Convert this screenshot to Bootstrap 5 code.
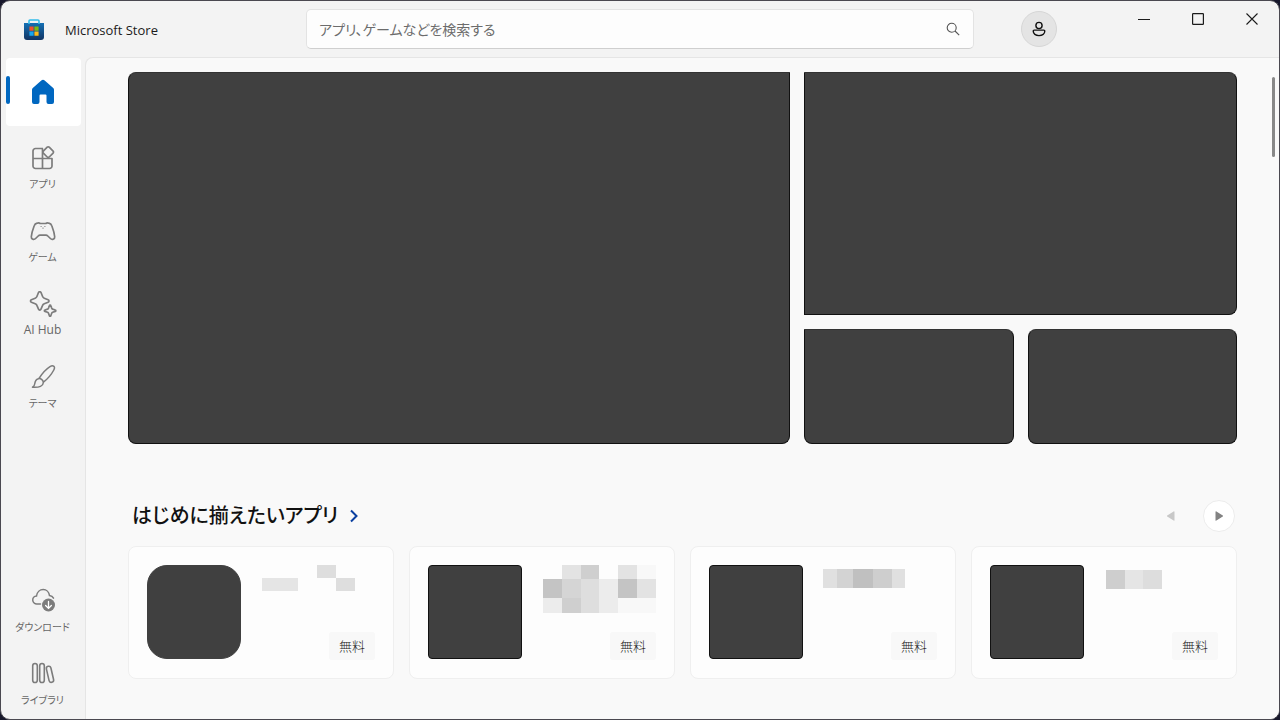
<!DOCTYPE html>
<html lang="ja">
<head>
<meta charset="utf-8">
<meta name="viewport" content="width=device-width, initial-scale=1">
<title>Microsoft Store</title>
<link href="https://cdn.jsdelivr.net/npm/bootstrap@5.3.0/dist/css/bootstrap.min.css" rel="stylesheet">
<style>
  body { background: #17172b; font-family: "Open Sans", "Noto Sans CJK JP", sans-serif; font-feature-settings: "palt"; color: #1b1b1b; }
  .app-window { min-height: 100vh; background: #f3f3f3; border: 1px solid #4a4850; border-radius: 10px; overflow: hidden; }
  .title-bar { display: grid; grid-template-columns: 305px minmax(0, 668px) 1fr; height: 56px; }
  .brand { padding-left: 22px; gap: 20px; font-size: 13px; line-height: 18px; padding-top: 2px; }
  .search-box { height: 40px; background: #fdfdfd; border: 1px solid #e3e3e3; border-bottom-color: #cfcfcf; border-radius: 5px; }
  .search-box input { font-size: 14px; color: #1b1b1b; padding: 0 12px; outline: 0; font-feature-settings: "palt"; }
  .search-box input::placeholder { color: #6c6c6c; opacity: 1; }
  .search-box button { width: 40px; color: #555; }
  .plain-btn { border: 0; background: none; padding: 0; display: flex; align-items: center; justify-content: center; }
  .plain-btn svg, .rail-link svg, .brand svg { flex: none; }
  .avatar { width: 36px; height: 36px; margin-left: 47px; margin-top: 10px; border-radius: 50%; background: #e4e4e4; border: 1px solid #d6d6d6; }
  .win-btn { width: 54px; height: 36px; color: #1b1b1b; }
  .rail { width: 84px; padding: 1px 4px 4px 5px; }
  .rail-list { gap: 5px; }
  .rail-link { height: 68px; width: 75px; padding: 14px 2px 0 0; gap: 4px; font-size: 10px; line-height: 18px; color: #666; text-decoration: none; border-radius: 4px; white-space: nowrap; }
  .rail-link svg { color: #7c7c7c; }
  .rail-link [lang="en"] { font-size: 12px; }
  .rail-link.active { background: #fff; padding: 0 2px 0 0; justify-content: center; position: relative; }
  .rail-link.active svg { color: #0067c0; }
  .rail-link.active::before { content: ""; position: absolute; left: 0; top: 18px; width: 4px; height: 28px; border-radius: 2px; background: #0067c0; }
  .store { background: #f9f9f9; border-left: 1px solid #e5e5e5; border-top: 1px solid #e5e5e5; border-top-left-radius: 8px; padding: 14px 42px 40px; min-width: 0; }
  .hero { display: grid; grid-template-columns: 661fr 209fr 209fr; grid-template-rows: 243px 115px; gap: 14px; }
  .tile { background: #404040; border: 1px solid #111; border-top-color: #333; border-radius: 8px; display: block; }
  .tile-main { grid-row: span 2; border-top-right-radius: 0; }
  .tile-wide { grid-column: span 2; border-radius: 0 8px 8px 0; }
  .tile-first { border-top-left-radius: 0; }
  .shelf-head { margin-top: 56px; margin-bottom: 14px; padding-left: 4px; padding-right: 2px; height: 32px; }
  .shelf-title { font-size: 20px; font-weight: 500; color: #111; text-decoration: none; gap: 12px; }
  .pager { width: 32px; height: 32px; border-radius: 50%; color: #828282; }
  .pager-on { background: #fff; border: 1px solid #ececec; }
  .pager:disabled { color: #c8c8c8; }
  .shelf { display: grid; grid-template-columns: repeat(4, minmax(0, 1fr)); gap: 15px; }
  .app-card { height: 133px; background: #fdfdfd; border: 1px solid #efefef; border-radius: 8px; padding: 18px; color: inherit; text-decoration: none; }
  .app-art { width: 94px; height: 94px; flex: none; background: #404040; border: 1px solid #111; border-radius: 4px; }
  .app-art-round { border-radius: 20px; border-color: #404040; }
  .app-text { padding-left: 20px; }
  .price { background: #f8f8f8; font-size: 13px; font-weight: 300; line-height: 28px; padding: 0 10px; border-radius: 3px; }
  .thumb { position: absolute; right: 4px; top: 20px; width: 3px; height: 80px; border-radius: 2px; background: #888; }
</style>
</head>
<body>
<div class="app-window d-flex flex-column">
  <header class="title-bar">
    <div class="brand d-flex align-items-center">
      <svg width="22" height="22" viewBox="0 0 22 22" aria-hidden="true">
        <defs><linearGradient id="bag" x1="0" y1="0" x2="0" y2="1"><stop offset="0" stop-color="#1470b4"/><stop offset="1" stop-color="#123463"/></linearGradient></defs>
        <path d="M1 4h20v14a3 3 0 0 1-3 3H4a3 3 0 0 1-3-3z" fill="url(#bag)"/>
        <path d="M6 5V2a1 1 0 0 1 1-1h8a1 1 0 0 1 1 1v3" fill="none" stroke="#35bdec" stroke-width="1.6"/>
        <path d="M6.4 7.5h4.200v4.200H6.400z" fill="#f0532b"/><path d="M11.400 7.500h4.200v4.200h-4.200z" fill="#80bb12"/>
        <path d="M6.400 12.500h4.200v4.200H6.400z" fill="#18a7ef"/><path d="M11.400 12.500h4.200v4.200h-4.200z" fill="#fdba19"/>
      </svg>
      <span>Microsoft Store</span>
    </div>
    <form class="search-box d-flex align-self-center" role="search">
      <input class="border-0 bg-transparent flex-grow-1" type="search" aria-label="検索" placeholder="アプリ、ゲームなどを検索する">
      <button class="plain-btn" type="button" aria-label="検索する"><svg width="14" height="14" viewBox="0 0 14 14" fill="none" stroke="currentColor" stroke-width="1.1"><circle cx="5.7" cy="5.7" r="4.5"/><path d="M9 9l4.200 4.200"/></svg></button>
    </form>
    <div class="d-flex align-items-start">
      <button class="plain-btn avatar" type="button" aria-label="アカウント"><svg width="16" height="16" viewBox="0 0 16 16" fill="none" stroke="#111" stroke-width="1.4"><circle cx="8" cy="4.5" r="3.1"/><path d="M3.200 9.100h9.600a1 1 0 0 1 1 1c0 2.700-2.500 4.500-5.800 4.500s-5.800-1.800-5.800-4.500a1 1 0 0 1 1-1z"/></svg></button>
      <div class="d-flex ms-auto">
        <button class="plain-btn win-btn" type="button" aria-label="最小化"><svg width="12" height="12" viewBox="0 0 12 12" stroke="currentColor"><path d="M0 6.500h12"/></svg></button>
        <button class="plain-btn win-btn" type="button" aria-label="最大化"><svg width="12" height="12" viewBox="0 0 12 12" fill="none" stroke="currentColor" stroke-width="1.2"><rect x=".6" y=".6" width="10.8" height="10.8" rx=".6"/></svg></button>
        <button class="plain-btn win-btn" type="button" aria-label="閉じる"><svg width="12" height="12" viewBox="0 0 12 12" stroke="currentColor" stroke-width="1.1"><path d="M.5.5l11 11M11.500.5l-11 11"/></svg></button>
      </div>
    </div>
  </header>

  <div class="d-flex flex-grow-1 position-relative">
    <nav class="rail d-flex flex-column justify-content-between flex-shrink-0" aria-label="メイン">
      <div class="rail-list d-flex flex-column">
        <a class="rail-link active d-flex flex-column align-items-center" href="#" aria-label="ホーム" aria-current="page">
          <svg width="24" height="26" viewBox="0 0 24 26" fill="currentColor"><path d="M10.300 1.600a2.500 2.500 0 0 1 3.400 0l8.500 7.300A2.500 2.500 0 0 1 23 10.800V23a2 2 0 0 1-2 2h-3.500a2 2 0 0 1-2-2v-6.500a1 1 0 0 0-1-1h-5a1 1 0 0 0-1 1V23a2 2 0 0 1-2 2H3a2 2 0 0 1-2-2V10.800c0-.7.300-1.400.8-1.900z"/></svg>
        </a>
        <a class="rail-link d-flex flex-column align-items-center" href="#">
          <svg width="26" height="26" viewBox="0 0 26 26" fill="none" stroke="currentColor" stroke-width="1.700" stroke-linejoin="round"><path d="M13 3.500H5.500A2.500 2.500 0 0 0 3 6v15a2.500 2.500 0 0 0 2.500 2.500h14A2.500 2.500 0 0 0 22 21v-7.500H3M12.500 3.500v20"/><path d="M17.200 2.200l-3.900 3.900a1.400 1.400 0 0 0 0 2l3.900 3.900a1.400 1.400 0 0 0 2 0l3.900-3.900a1.400 1.400 0 0 0 0-2l-3.900-3.900a1.400 1.400 0 0 0-2 0z"/></svg>
          <span>アプリ</span>
        </a>
        <a class="rail-link d-flex flex-column align-items-center" href="#">
          <svg width="26" height="26" viewBox="0 0 26 26" fill="none" stroke="currentColor" stroke-width="1.700" stroke-linejoin="round"><path d="M7.200 5.200c1-.5 2.200-.3 3 .3h5.600c.8-.6 2-.8 3-.3 1.600.3 2.500 1.100 3 2.600 1.400 3.700 2.600 7.500 2.900 11 .2 2.400-2.700 3.400-4.300 1.700L17.800 18c-.5-.5-1.100-.8-1.800-.8h-6c-.7 0-1.300.3-1.800.8l-2.600 2.500C4 22.200 1.100 21.200 1.300 18.800c.3-3.500 1.500-7.300 2.900-11 .5-1.500 1.400-2.300 3-2.600z"/><path d="M10.600 8.500h1M14.400 8.500h1M12.500 10.200h1" stroke-width="1.200"/></svg>
          <span>ゲーム</span>
        </a>
        <a class="rail-link d-flex flex-column align-items-center" href="#">
          <svg width="28" height="26" viewBox="0 0 28 26" fill="none" stroke="currentColor" stroke-width="1.700" stroke-linejoin="round"><path d="M9.500 1.500c.8-1 2-1 2.500 0l1.600 4c.3.800.9 1.400 1.700 1.700l3.800 1.500c1.200.5 1.200 2 0 2.500l-3.800 1.500c-.8.300-1.400.9-1.700 1.700l-1.600 3.800c-.5 1.200-2 1.200-2.500 0l-1.600-3.800c-.3-.8-.9-1.400-1.700-1.700l-3.800-1.500c-1.200-.5-1.200-2 0-2.500l3.800-1.500c.8-.3 1.400-.9 1.700-1.700z"/><path d="M20.400 14.500c.2-.7 1.200-.7 1.400 0l.9 2.600c.2.500.5.800 1 1l2.600.9c.7.200.7 1.200 0 1.400l-2.600.9c-.5.200-.8.500-1 1l-.9 2.400c-.2.700-1.200.7-1.400 0l-.9-2.400c-.2-.5-.5-.8-1-1l-2.600-.9c-.7-.2-.7-1.200 0-1.400l2.600-.9c.5-.2.800-.5 1-1z"/></svg>
          <span lang="en">AI Hub</span>
        </a>
        <a class="rail-link d-flex flex-column align-items-center" href="#">
          <svg width="26" height="26" viewBox="0 0 26 26" fill="none" stroke="currentColor" stroke-width="1.500" stroke-linejoin="round"><path d="M9 14.500C12 9.500 15.500 5.500 20 2.600c1.500-1 3-1 3.900-.3.800.8.700 2.200-.1 3.700-2.500 4.700-6 8.900-10.600 12.300"/><path d="M8.300 14.700c2-.8 5.200 1.500 5 4-.2 3.200-3.700 5-10.800 4.500 1.200-.7 2-1.500 2.200-3.200.3-2.600 1.300-4.600 3.600-5.300z"/></svg>
          <span>テーマ</span>
        </a>
      </div>
      <div class="rail-list d-flex flex-column">
        <a class="rail-link d-flex flex-column align-items-center" href="#">
          <svg width="26" height="26" viewBox="0 0 26 26" fill="none" stroke="currentColor" stroke-width="1.500" stroke-linecap="round"><path d="M10.500 16H7a4 4 0 0 1-.5-8C7 4 10 1.500 13.200 1.500S19 4 19.500 7.600c1.800.2 3.200 1 4 2.600"/><circle cx="18.500" cy="17" r="6.500" fill="currentColor" stroke="none"/><path d="M18.500 13.400v6.800M15.600 17.500l2.900 2.900 2.900-2.900" stroke="#fff" stroke-width="1.300"/></svg>
          <span>ダウンロード</span>
        </a>
        <a class="rail-link d-flex flex-column align-items-center" href="#">
          <svg width="26" height="26" viewBox="0 0 26 26" fill="none" stroke="currentColor" stroke-width="1.600"><rect x="2.700" y="2.500" width="4.600" height="19" rx="2.300"/><rect x="9.700" y="2.500" width="4.600" height="19" rx="2.300"/><rect x="-2.300" y="-8.200" width="4.600" height="16.400" rx="2.300" transform="translate(20 13.300) rotate(-13)"/></svg>
          <span>ライブラリ</span>
        </a>
      </div>
    </nav>

    <main class="store flex-grow-1">
      <section class="hero" aria-label="注目">
        <a class="tile tile-main" href="#" aria-label="注目 1"></a>
        <a class="tile tile-wide" href="#" aria-label="注目 2"></a>
        <a class="tile tile-first" href="#" aria-label="注目 3"></a>
        <a class="tile" href="#" aria-label="注目 4"></a>
      </section>

      <div class="shelf-head d-flex align-items-center justify-content-between">
        <h2 class="m-0 lh-1"><a class="shelf-title d-flex align-items-center" href="#">はじめに揃えたいアプリ
          <svg width="8" height="14" viewBox="0 0 8 14" fill="none" stroke="#0a3fa0" stroke-width="2"><path d="M1 1.500L6.500 7 1 12.500"/></svg></a></h2>
        <div class="d-flex gap-3">
          <button class="plain-btn pager" type="button" disabled aria-label="前へ"><svg width="10" height="10" viewBox="0 0 10 10" fill="currentColor"><path d="M8.500.8v8.400c0 .5-.5.700-.9.400L1.200 5.500a.6.6 0 0 1 0-1L7.600.4c.4-.3.9-.1.900.4z"/></svg></button>
          <button class="plain-btn pager pager-on" type="button" aria-label="次へ"><svg width="10" height="10" viewBox="0 0 10 10" fill="currentColor"><path d="M1.500.8v8.400c0 .5.5.700.9.400l6.400-4.100a.6.6 0 0 0 0-1L2.400.4c-.4-.3-.9-.1-.9.400z"/></svg></button>
        </div>
      </div>

      <section class="shelf" aria-label="はじめに揃えたいアプリ">
        <a class="app-card d-flex" href="#">
          <div class="app-art app-art-round"></div>
          <div class="app-text d-flex flex-column justify-content-between flex-grow-1">
            <svg width="114" height="48" shape-rendering="crispEdges"><path fill="#e5e5e5" d="M1 13h36v13H1z"/><path fill="#dedede" d="M56 0h19v13H56zM75 13h19v13H75z"/></svg>
            <span class="price align-self-end">無料</span>
          </div>
        </a>
        <a class="app-card d-flex" href="#">
          <div class="app-art"></div>
          <div class="app-text d-flex flex-column justify-content-between flex-grow-1">
            <svg width="114" height="48" shape-rendering="crispEdges"><path fill="#e3e3e3" d="M20 0h19v14H20zM76 0h19v14H76zM95 14h19v19H95z"/><path fill="#cfcfcf" d="M39 0h18v14H39zM20 33h19v15H20z"/><path fill="#f8f8f8" d="M95 0h19v14H95zM76 33h38v15H76z"/><path fill="#c4c4c4" d="M1 14h19v19H1zM76 14h19v19H76z"/><path fill="#d5d5d5" d="M20 14h19v19H20z"/><path fill="#dedede" d="M39 14h18v34H39z"/><path fill="#ececec" d="M57 14h19v34H57zM1 33h19v15H1z"/></svg>
            <span class="price align-self-end">無料</span>
          </div>
        </a>
        <a class="app-card d-flex" href="#">
          <div class="app-art"></div>
          <div class="app-text d-flex flex-column justify-content-between flex-grow-1">
            <svg width="114" height="48" shape-rendering="crispEdges"><path fill="#e0e0e0" d="M0 4h14v19H0zM69 4h13v19H69z"/><path fill="#d3d3d3" d="M14 4h16v19H14z"/><path fill="#c0c0c0" d="M30 4h20v19H30z"/><path fill="#cecece" d="M50 4h19v19H50z"/></svg>
            <span class="price align-self-end">無料</span>
          </div>
        </a>
        <a class="app-card d-flex" href="#">
          <div class="app-art"></div>
          <div class="app-text d-flex flex-column justify-content-between flex-grow-1">
            <svg width="114" height="48" shape-rendering="crispEdges"><path fill="#cecece" d="M2 5h19v19H2z"/><path fill="#e5e5e5" d="M21 5h18v19H21z"/><path fill="#dddddd" d="M39 5h19v19H39z"/></svg>
            <span class="price align-self-end">無料</span>
          </div>
        </a>
      </section>
    </main>
    <div class="thumb"></div>
  </div>
</div>
<script src="https://cdn.jsdelivr.net/npm/bootstrap@5.3.0/dist/js/bootstrap.bundle.min.js"></script>
</body>
</html>
